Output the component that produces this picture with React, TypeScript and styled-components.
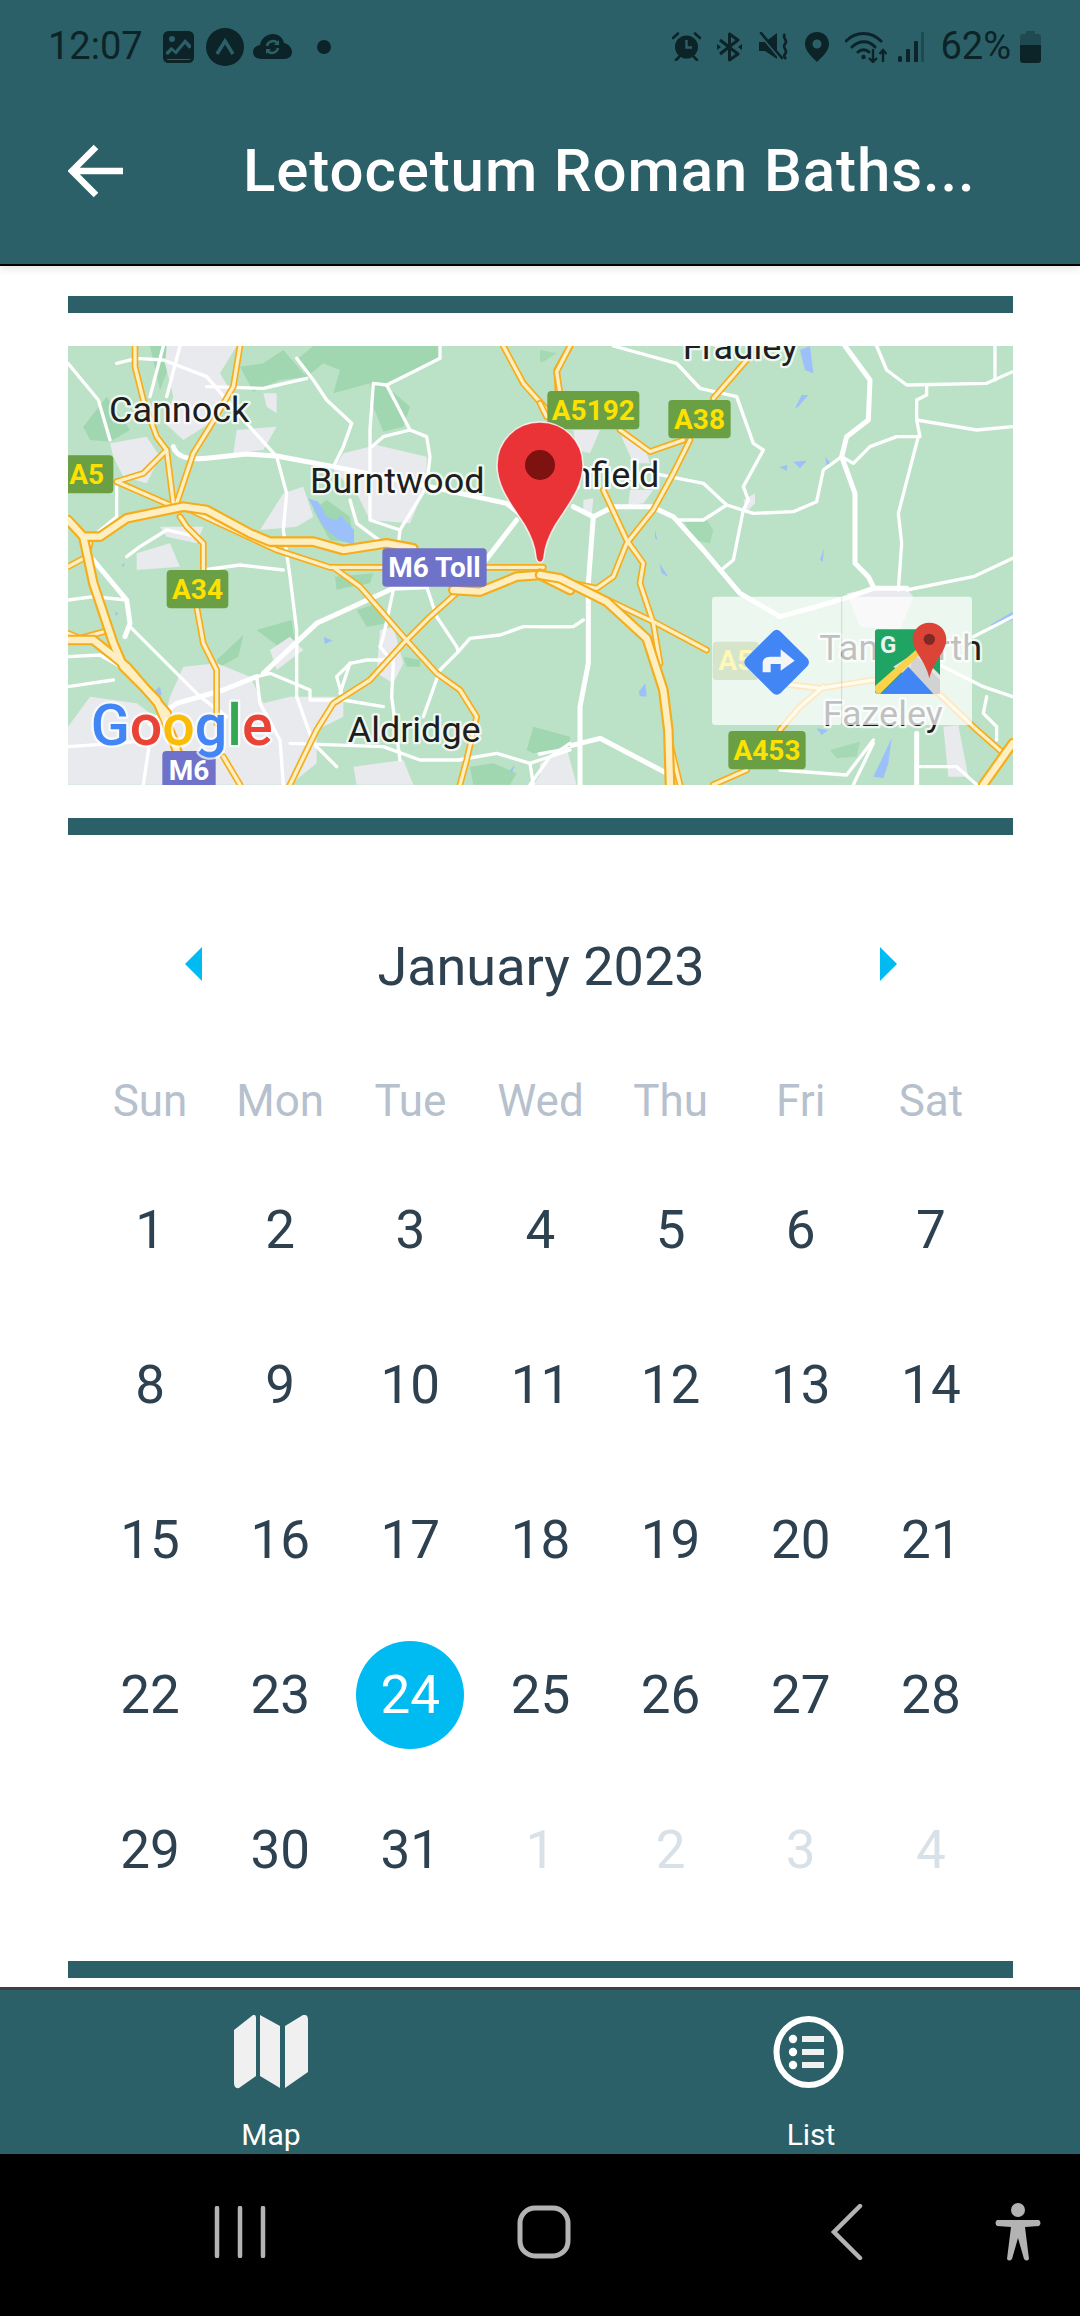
import React from 'react';
import styled, { createGlobalStyle } from 'styled-components';

const TEAL = '#2b6068';
const INK = '#0c2327';

const Global = createGlobalStyle`
  html, body { margin: 0; padding: 0; background: #fff; }
  body { font-family: Roboto, "Liberation Sans", sans-serif; }
  * { box-sizing: border-box; }
`;

const Page = styled.div`
  width: 1080px;
  height: 2316px;
  display: flex;
  flex-direction: column;
  overflow: hidden;
  background: #fff;
`;

const Header = styled.header`
  height: 266px;
  flex: none;
  background: ${TEAL};
  border-bottom: 2px solid #000;
  box-shadow: 0 3px 8px rgba(0, 0, 0, 0.1);
  position: relative;
  z-index: 1;
  display: flex;
  flex-direction: column;
`;

const StatusBar = styled.div`
  height: 93px;
  display: flex;
  align-items: center;
  justify-content: space-between;
  padding: 0 39px 0 48px;
`;

const StatusGroup = styled.div`
  display: flex;
  align-items: center;
`;

const StatusText = styled.span<{ $ml?: number }>`
  font-size: 38px;
  line-height: 93px;
  color: ${INK};
  font-weight: 400;
  margin-left: ${p => p.$ml ?? 0}px;
`;

const StatusIcon = styled.svg<{ $ml?: number }>`
  display: block;
  flex: none;
  margin-left: ${p => p.$ml ?? 0}px;
`;

const Toolbar = styled.div`
  flex: 1;
  display: flex;
  align-items: center;
  padding: 0 0 16px 68px;
`;

const BackIcon = styled.svg`
  display: block;
  flex: none;
`;

const Title = styled.h1`
  margin: 0 0 0 119px;
  font-size: 60px;
  line-height: 70px;
  font-weight: 500;
  letter-spacing: 0.9px;
  color: #fff;
  white-space: nowrap;
`;

const Main = styled.main`
  flex: 1;
  padding: 30px 67px 0 68px;
  display: flex;
  flex-direction: column;
`;

const Rule = styled.div`
  height: 17px;
  flex: none;
  background: ${TEAL};
`;

const MapFrame = styled.div`
  height: 439px;
  margin: 33px 0 33px;
  flex: none;
`;

const MapSvg = styled.svg`
  display: block;
  width: 945px;
  height: 439px;
`;

const Calendar = styled.section`
  margin: 92px 17px 34px 17px;
`;

const MonthRow = styled.div`
  height: 80px;
  display: flex;
  align-items: center;
  justify-content: space-between;
  padding: 0 99px 0 100px;
`;

const MonthTitle = styled.div`
  font-size: 54px;
  line-height: 80px;
  color: #2d4150;
`;

const Arrow = styled.div<{ $dir: 'left' | 'right' }>`
  width: 0;
  height: 0;
  border-top: 17px solid transparent;
  border-bottom: 17px solid transparent;
  ${p =>
    p.$dir === 'left'
      ? 'border-right: 17px solid #00bbf2;'
      : 'border-left: 17px solid #00bbf2;'}
  margin-top: -6px;
`;

const WeekRow = styled.div`
  display: grid;
  grid-template-columns: repeat(7, 1fr);
  height: 60px;
  margin: 64px 0 21px;
`;

const WeekDay = styled.div`
  text-align: center;
  font-size: 44px;
  line-height: 60px;
  color: #b6c1cd;
`;

const DayGrid = styled.div`
  display: grid;
  grid-template-columns: repeat(7, 1fr);
  grid-auto-rows: 155px;
`;

const DayCell = styled.div`
  display: flex;
  align-items: center;
  justify-content: center;
`;

const Day = styled.div<{ $muted?: boolean; $selected?: boolean }>`
  width: 108px;
  height: 108px;
  border-radius: 50%;
  display: flex;
  align-items: center;
  justify-content: center;
  font-size: 53px;
  color: ${p => (p.$selected ? '#fff' : p.$muted ? '#d9e1e8' : '#2d4150')};
  background: ${p => (p.$selected ? '#00bbf2' : 'transparent')};
`;

const TabBar = styled.nav`
  height: 167px;
  flex: none;
  background: ${TEAL};
  border-top: 3px solid #3d3f40;
  display: grid;
  grid-template-columns: 1fr 1fr;
`;

const Tab = styled.div`
  display: flex;
  flex-direction: column;
  align-items: center;
  padding-top: 25px;
`;

const TabIcon = styled.svg<{ $shift?: number }>`
  display: block;
  height: 74px;
  margin-right: ${p => p.$shift ?? 0}px;
`;

const TabLabel = styled.span`
  margin: 28px 0 0 2px;
  font-size: 30px;
  line-height: 36px;
  color: #fff;
`;

const NavBar = styled.div`
  height: 162px;
  flex: none;
  background: #000;
  display: flex;
  align-items: center;
  padding: 0 0 0 214px;
`;

const NavIcon = styled.svg<{ $ml: number }>`
  display: block;
  flex: none;
  margin-left: ${p => p.$ml}px;
  margin-top: -6px;
`;

const darkGreen = [
  'M745,85 L790,48 H1170 V85 L1090,125 L1005,165 L1080,230 L1060,290 L1000,305 L970,230 L960,160 L850,190 L870,120 L820,100 L770,140 Z',
  'M100,290 L170,200 L240,300 L180,335 L120,330 Z',
  'M570,110 L640,100 L700,60 L770,140 L690,150 L610,185 Z',
  'M300,48 H380 L330,180 Z',
  'M620,900 L725,870 L735,945 L680,945 Z',
  'M500,990 L580,915 L565,980 L510,1010 Z',
  'M920,840 L970,825 L1010,880 L950,890 Z',
  'M790,540 L830,510 L900,560 L910,640 L840,630 Z',
  'M855,740 L970,730 L960,760 L900,770 L860,780 Z',
  'M1430,1260 L1450,1190 L1560,1220 V1250 L1450,1270 Z',
  'M1060,980 L1110,990 L1110,1010 L1070,1010 Z',
  'M1260,1310 L1330,1300 L1400,1330 L1380,1364 L1270,1364 Z',
];

const urbanLeft = [
  'M350,48 H560 L510,130 L540,180 L480,280 L400,330 L345,280 L370,200 L345,100 Z',
  'M180,340 L290,320 L330,380 L290,460 L220,440 L190,380 Z',
  'M880,370 L980,345 L1130,380 L1130,460 L1080,580 L960,570 L920,490 L850,420 Z',
  'M560,300 L680,290 L640,360 L550,370 Z',
  'M640,190 L680,190 L680,250 L650,230 Z',
  'M330,590 L460,590 L440,640 L350,620 Z',
  'M260,670 L360,640 L390,710 L260,720 Z',
  'M700,490 L760,470 L790,560 L740,590 L630,600 Z',
  'M54,1190 L120,1100 L260,1120 L340,1180 L360,1100 L400,1010 L500,1000 L600,1040 L640,1120 L720,1100 L880,1100 L880,1160 L800,1200 L800,1300 L720,1364 H54 Z',
  'M660,960 L720,920 L760,960 L680,1020 Z',
  'M990,900 L1030,890 L1060,1000 L1030,1060 L980,1030 Z',
  'M1480,1320 L1560,1290 V1364 H1450 Z',
  'M910,1310 L1060,1290 L1090,1364 H920 Z',
];

const waterLeft = [
  'M775,505 L805,515 L830,560 L860,572 L870,555 L912,600 V645 L860,625 L820,590 Z',
  'M822,920 L848,932 L824,942 Z',
  'M310,1085 L330,1070 L335,1095 L320,1100 Z',
  'M195,845 L205,850 L198,858 Z',
  'M215,705 L225,700 L220,712 Z',
  'M1380,1320 L1395,1305 L1385,1330 Z',
];

const whiteLeftThin = [
  'M54,100 L145,210 L180,330',
  'M200,100 L260,85 L340,90 L470,140 L590,280 L680,380 L710,490 L700,600 L720,740 L740,900 L740,1100 L790,1240 L860,1310',
  'M340,48 L300,200', 'M390,48 L350,200',
  'M470,170 L640,175 L770,145',
  'M740,85 L790,150 L830,210 L905,280 L880,350 L850,410',
  'M1170,48 V85 L1090,125 L1010,165 L970,160 L960,300 V570 L1050,600',
  'M1010,165 L1080,300 L1130,320 L1140,380 L1130,470 L1050,600 L1030,780 L1000,920 L990,950 L1030,1000 L1025,1100 L1050,1290',
  'M1080,300 L1000,320 L965,350',
  'M900,510 L920,580 L1000,640',
  'M1130,770 L1160,860 L1220,950 L1225,965 L1260,925 L1350,915 L1420,890 L1560,890',
  'M1225,965 L1170,1020 L1120,1160',
  'M620,1040 L660,1030 L780,1080 L780,1110 L880,1110 L1000,1130',
  'M200,470 V560 L140,610',
  'M54,810 L130,800 L230,810',
  'M54,980 L150,975 L230,1020',
  'M230,680 L270,650 L350,600 L440,620',
  'M460,720 L570,705 L700,720',
  'M240,890 L450,1100 L530,1160',
  'M1225,1290 L1340,1270 L1440,1300 L1560,1260',
  'M720,1240 L1000,1250 L1110,1290 L1230,1290',
  'M1440,1300 L1450,1364', 'M1560,1240 L1500,1280 L1440,1364',
  'M900,1000 L950,990 L1030,990', 'M900,1000 L870,1090',
  'M620,1040 L630,1120 L690,1230 L700,1364',
  'M54,1070 L120,1060 L190,1050',
  'M54,1250 L200,1240 L300,1230 L280,1364',
  'M880,1110 L860,1040 L900,1000',
];

const whiteLeftWide = [
  'M370,350 C380,385 420,390 470,385 L590,372 L680,378 L850,410 L1000,440 L1300,505 L1370,520 L1420,560',
  'M640,1030 L800,880 L1030,775 L1130,770',
  'M620,1040 L520,1080 L380,1120 L300,1180',
  'M130,690 L230,810 L240,880 L225,920',
  'M1300,700 L1400,570',
];

const yellowThick = [
  'M54,570 L100,620 L150,620 L230,565 L400,530 L470,540 L600,610 L660,635 L790,635 L880,660 L1010,640 L1090,655',
  'M100,620 L130,760 L190,940 L220,1010 L320,1110 L370,1230 L390,1290',
  'M54,930 H130 L230,1010 L350,1150',
  'M1210,780 L1290,785 L1400,740 L1470,735 L1560,780',
];

const yellowThin = [
  'M400,530 L680,660 L840,712 H1480',
  'M54,910 L90,925 L180,900',
  'M255,48 V110 L280,210 L320,320 L350,360 L370,520',
  'M570,48 L550,170 L480,290 L430,370 L380,520',
  'M350,360 L280,430 L200,455 L360,525',
  'M390,560 L410,590 L460,640 V730',
  'M440,830 L460,940 L500,1020 V1180',
  'M120,640 L110,680 L54,710',
  'M850,712 L930,770 L1060,920 L1160,1030 L1230,1080 L1280,1160 L1250,1290 L1230,1364',
  'M1230,780 L1140,860 L1060,940 L960,1050 L850,1120 L800,1200 L720,1364',
  'M1360,48 L1420,160 L1500,250',
  'M1560,50 L1520,120 L1525,200',
  'M520,1280 L570,1364',
];

const whiteRightThin = [
  'M220,48 L410,100 L480,175 L590,200 L640,340 L670,360 L610,470 L625,510 L610,540 L580,690 L550,715',
  'M410,100 L480,175',
  'M1010,48 L1040,120 L1100,165 L1340,160 L1418,125',
  'M1160,165 V195 L1130,210 V270 L1310,300 L1418,290',
  'M1130,270 L1140,320 L1070,320 L990,350 L940,400 L905,380',
  'M1135,320 L1075,550 L1085,640 L1075,780',
  'M1365,48 V150',
  'M410,570 H490 L560,525 L640,550 L760,545 L830,515 L850,420 L905,380',
  'M340,430 L490,460 L560,525',
  'M0,890 H100 L130,870',
  'M720,1320 L920,1335 L1000,1230',
  'M1130,1310 H1250 L1310,1364',
  'M1100,780 L1300,740 L1418,685',
  'M1190,1000 L1330,1070 L1418,1100',
  'M1340,1100 L1330,1150 L1370,1190 V1230',
  'M1300,920 L1418,860',
  'M1000,1240 L940,1364',
];

const whiteRightWide = [
  'M915,48 L990,150 L985,270 L920,320 L905,380 L945,490 V700 L985,740 L1000,770',
  'M345,535 L400,560 L490,660 L600,790 L720,860 L830,830 L930,800 L1000,775 L1100,775',
  'M100,530 L160,560 L220,530 H345',
  'M160,560 L145,760 V1000 L120,1130 V1364',
  'M0,1270 L180,1225 L400,1340',
  'M1130,1210 V1364',
];

const waterRight = [
  'M780,60 L810,48 L820,130 L795,120 Z',
  'M765,235 L785,195 L805,195 L775,230 Z',
  'M760,395 L800,392 L780,415 Z',
  'M718,412 L742,405 L740,422 Z',
  'M855,380 L872,400 L860,405 Z',
  'M358,700 L385,740 L365,730 Z',
  'M296,1085 L316,1060 L320,1100 L300,1098 Z',
  'M840,690 L852,655 L848,695 Z',
  'M1350,885 L1418,845 V870 L1370,885 Z',
  'M1000,1340 L1055,1225 L1045,1300 L1030,1345 Z',
  'M830,1195 L865,1200 L845,1215 Z',
  'M345,600 L352,630 L345,625 Z',
];

const urbanRight = [
  'M100,300 L180,300 L150,370 L110,360 Z',
  'M240,310 L320,370 L330,400 L280,400 Z',
  'M270,480 L340,480 L310,520 L265,525 Z',
  'M130,510 L160,505 L155,555 L130,545 Z',
  'M610,510 L645,490 L645,520 L620,545 Z',
  'M920,790 L1000,775 L1100,775 L1120,800 L1080,900 L960,890 Z',
  'M1210,1190 L1255,1185 L1285,1340 L1225,1340 Z',
  'M0,1300 L80,1255 L110,1364 H0 Z',
];

const greenRight = [
  'M430,570 L500,570 L520,600 L510,640 L460,630 Z',
  'M870,1260 L960,1235 L950,1280 L890,1285 Z',
  'M0,1230 L80,1220 L60,1255 L0,1260 Z',
  'M0,60 L50,70 L10,95 H0 Z',
];

const Roads = ({ d, color, w }: { d: string[]; color: string; w: number }) => (
  <g fill="none" stroke={color} strokeWidth={w} strokeLinejoin="round" strokeLinecap="round">
    {d.map((p, i) => <path key={i} d={p} />)}
  </g>
);

const Fills = ({ d, color }: { d: string[]; color: string }) => (
  <g fill={color}>{d.map((p, i) => <path key={i} d={p} />)}</g>
);

const Yellow = ({ d, outer, inner }: { d: string[]; outer: number; inner: number }) => (
  <>
    <Roads d={d} color="#f6ad1c" w={outer} />
    <Roads d={d} color="#feefc3" w={inner} />
  </>
);

const PlaceLabel = styled.text<{ $halo?: string }>`
  font-family: Roboto, sans-serif;
  font-size: 108px;
  fill: #1c1e20;
  stroke: ${p => p.$halo ?? 'rgba(255, 255, 255, 0.75)'};
  stroke-width: 14px;
  paint-order: stroke;
  stroke-linejoin: round;
`;

const ShieldText = styled.text<{ $fill: string }>`
  font-family: Roboto, sans-serif;
  font-size: 84px;
  font-weight: 700;
  fill: ${p => p.$fill};
  text-anchor: middle;
`;

const Shield = ({ x, y, w, h, label, purple }: { x: number; y: number; w: number; h: number; label: string; purple?: boolean }) => (
  <g>
    <rect x={x} y={y} width={w} height={h} rx={12} fill={purple ? '#6f72c9' : '#6a9f43'} />
    <ShieldText x={x + w / 2} y={y + 86} $fill={purple ? '#fff' : '#fde100'}>{label}</ShieldText>
  </g>
);

const GoogleWord = styled.text`
  font-family: Roboto, sans-serif;
  font-size: 172px;
  font-weight: 500;
  stroke: rgba(255, 255, 255, 0.7);
  stroke-width: 14px;
  paint-order: stroke;
  stroke-linejoin: round;
`;

const MapsG = styled.text`
  font-family: Roboto, sans-serif;
  font-size: 72px;
  font-weight: 700;
  fill: #e8f5ee;
`;

const MapPicture = () => (
  <MapSvg viewBox="0 0 945 439" xmlns="http://www.w3.org/2000/svg">
    <rect width="945" height="439" fill="#bbe2c6" />
    <g transform="translate(472 -16) scale(.33333)">
      <Fills d={greenRight} color="#a5d9b4" />
      <Fills d={urbanRight} color="#e8eaed" />
      <Fills d={waterRight} color="#9cc0f9" />
      <Roads d={whiteRightThin} color="#fff" w={10} />
      <Roads d={whiteRightWide} color="#fff" w={15} />
    </g>
    <g transform="translate(-18 -16) scale(.33333)">
      <Fills d={darkGreen} color="#a0d6b0" />
      <Fills d={urbanLeft} color="#e8eaed" />
      <Fills d={waterLeft} color="#9cc0f9" />
      <Roads d={whiteLeftThin} color="#fff" w={10} />
      <Roads d={whiteLeftWide} color="#fff" w={15} />
      <Yellow d={yellowThin} outer={20} inner={10} />
      <Yellow d={yellowThick} outer={32} inner={19} />
      <PlaceLabel x="177" y="275">Cannock</PlaceLabel>
      <PlaceLabel x="780" y="490">Burntwood</PlaceLabel>
      <PlaceLabel x="893" y="1235">Aldridge</PlaceLabel>
      <Shield x={30} y={376} w={160} h={114} label="A5" />
      <Shield x={350} y={720} w={185} h={115} label="A34" />
      <Shield x={997} y={655} w={313} h={115} label="M6 Toll" purple />
      <Shield x={337} y={1263} w={160} h={115} label="M6" purple />
      <GoogleWord x="122" y="1245">
        <tspan fill="#4285f4">G</tspan>
        <tspan fill="#ea4335">o</tspan>
        <tspan fill="#fbbc05">o</tspan>
        <tspan fill="#4285f4">g</tspan>
        <tspan fill="#34a853">l</tspan>
        <tspan fill="#ea4335">e</tspan>
      </GoogleWord>
    </g>
    <g transform="translate(472 -16) scale(.33333)">
      <Yellow
        d={[
          'M90,48 L50,125 L60,190', 'M0,220 L20,260',
          'M620,90 L520,205', 'M450,330 L400,430 L340,540 L260,640 L220,740 L170,775 L100,760',
          'M240,300 L330,365 L430,330',
          'M190,480 L260,630 L310,700 L300,760 L340,880 L360,1000',
          'M0,725 L140,780 L350,880 L500,960',
          'M720,1060 L840,1075 L1000,1050 L1190,1085 L1300,1190 L1390,1270',
          'M720,1200 L780,1130 L850,1070',
          'M520,1364 L620,1320',
          'M390,1240 L420,1364',
        ]}
        outer={20}
        inner={10}
      />
      <Yellow
        d={['M0,735 L60,745 L200,815 L320,925 L370,1080 L385,1200 L390,1364', 'M1330,1364 L1418,1240']}
        outer={32}
        inner={19}
      />
      <PlaceLabel x="358" y="472" textAnchor="end" $halo="#fff">Lichfield</PlaceLabel>
      <PlaceLabel x="428" y="88">Fradley</PlaceLabel>
      <PlaceLabel x="838" y="990">Tamworth</PlaceLabel>
      <PlaceLabel x="848" y="1187">Fazeley</PlaceLabel>
      <Shield x={22} y={183} w={276} h={115} label="A5192" />
      <Shield x={385} y={210} w={187} h={115} label="A38" />
      <Shield x={565} y={1203} w={232} h={115} label="A453" />
      <Shield x={518} y={935} w={138} h={115} label="A5" />
      <rect x="516" y="800" width="389" height="385" rx="10" fill="#fff" fillOpacity=".72" />
      <rect x="905" y="800" width="391" height="385" rx="10" fill="#fff" fillOpacity=".72" />
      <rect x="903" y="800" width="4" height="385" fill="#000" fillOpacity=".08" />
      <path d="M710,899 Q716,899 722,905 L802,985 Q812,997 802,1009 L722,1089 Q710,1100 698,1089 L618,1009 Q608,997 618,985 L698,905 Q704,899 710,899 Z" fill="#4285f4" />
      <path d="M668,1027 V1000 Q668,980 690,980 H722 V958 L764,992 L722,1022 V1002 H692 V1027 Z" fill="#f4f6f6" />
      <rect x="1005" y="898" width="195" height="193" rx="8" fill="#1fa463" />
      <path d="M1130,965 L1200,1035 V1091 H1180 L1060,1010 Z" fill="#e4e4e4" />
      <path d="M1120,970 L1200,1050 V1091 H1180 L1110,1020 Z" fill="#d2d2d2" />
      <path d="M1024,1091 L1105,1010 L1180,1091 Z" fill="#4285f4" />
      <path d="M1005,1068 L1130,958 L1140,972 L1020,1091 H1012 L1005,1083 Z" fill="#fbd34b" />
      <MapsG x="1020" y="968">G</MapsG>
      <path d="M1168,878 C1197,878 1219,900 1219,928 C1219,965 1182,990 1168,1045 C1156,990 1118,965 1118,928 C1118,900 1140,878 1168,878 Z" fill="#db4437" />
      <circle cx="1168" cy="928" r="17" fill="#7e2a22" />
    </g>
    <path
      d="M472,76 C496,76 515,95 515,119 C515,142 500,159 488,178 C482,188 477,200 476,211 C475,218 469,218 468,211 C467,200 462,188 456,178 C444,159 429,142 429,119 C429,95 448,76 472,76 Z"
      fill="#ea3337"
      stroke="#fff"
      strokeOpacity=".8"
      strokeWidth="1.5"
    />
    <circle cx="472" cy="119" r="15" fill="#7e1210" />
  </MapSvg>
);

const days: { n: number; muted?: boolean; selected?: boolean }[] = [
  ...Array.from({ length: 31 }, (_, i) => ({ n: i + 1, selected: i + 1 === 24 })),
  ...[1, 2, 3, 4].map(n => ({ n, muted: true })),
];

const App = () => (
  <Page>
    <Global />
    <Header>
      <StatusBar>
        <StatusGroup>
          <StatusText>12:07</StatusText>
          <StatusIcon $ml={20} width="31" height="32" viewBox="0 0 31 32">
            <rect x="1.5" y="1.5" width="28" height="29" rx="4" fill="none" stroke={INK} strokeWidth="3" />
            <path d="M3,3 H28 V14 L22,8 L12,20 L8,16 L3,21 Z" fill={INK} />
            <path d="M3,28 V24 L9,18 L13,22 L22,11 L28,17 V28 Z" fill={INK} />
            <circle cx="9" cy="8" r="3" fill={TEAL} />
            <path d="M4,23 L9,18 L13,22 L22,11 L27,17" fill="none" stroke={TEAL} strokeWidth="2.5" />
          </StatusIcon>
          <StatusIcon $ml={12} width="38" height="38" viewBox="0 0 38 38">
            <circle cx="19" cy="19" r="19" fill={INK} />
            <path d="M11,26 L19,13 L27,26" fill="none" stroke={TEAL} strokeWidth="3.5" />
          </StatusIcon>
          <StatusIcon $ml={9} width="39" height="25" viewBox="0 0 39 25">
            <path d="M8,25 C2,25 0,21 0,18 C0,14 3,12 7,11 C8,5 13,0 20,0 C26,0 30,4 31,9 C36,10 39,14 39,18 C39,22 36,25 31,25 Z" fill={INK} />
            <path d="M14,12 A6,6 0 0 1 25,10 M25,14 A6,6 0 0 1 14,16" fill="none" stroke={TEAL} strokeWidth="2.5" />
            <path d="M26,6 V11 H21 Z M13,20 V15 H18 Z" fill={TEAL} />
          </StatusIcon>
          <StatusIcon $ml={25} width="14" height="14" viewBox="0 0 14 14">
            <circle cx="7" cy="7" r="7" fill={INK} />
          </StatusIcon>
        </StatusGroup>
        <StatusGroup>
          <StatusIcon width="29" height="29" viewBox="0 0 29 29">
            <circle cx="14.5" cy="15" r="11.5" fill={INK} />
            <path d="M14.5,8 V15.5 H20" fill="none" stroke={TEAL} strokeWidth="2.4" />
            <path d="M1,6 L6,1.5 M28,6 L23,1.5 M4,28 L7,25 M25,28 L22,25" stroke={INK} strokeWidth="2.6" strokeLinecap="round" />
          </StatusIcon>
          <StatusIcon $ml={16} width="25" height="30" viewBox="0 0 25 30">
            <path d="M3,8 L21,22 L12.5,28 V2 L21,8 L3,22" fill="none" stroke={INK} strokeWidth="3" strokeLinejoin="round" />
            <path d="M0,12 L4,15 L0,18 Z M25,12 L21,15 L25,18 Z" fill={INK} />
          </StatusIcon>
          <StatusIcon $ml={17} width="30" height="29" viewBox="0 0 30 29">
            <path d="M0,10 H6 L18,1 V27 L6,19 H0 Z" fill={INK} />
            <path d="M1,2 L22,27" stroke={TEAL} strokeWidth="3" />
            <path d="M2,1 L23,26" stroke={INK} strokeWidth="2.6" strokeLinecap="round" />
            <path d="M26,2 C22,6 30,8 26,12 C22,16 30,18 26,22 C24,24 26,26 27,27" fill="none" stroke={INK} strokeWidth="2.6" />
          </StatusIcon>
          <StatusIcon $ml={16} width="24" height="30" viewBox="0 0 24 30">
            <path d="M12,0 C19,0 24,5 24,12 C24,19 17,25 12,30 C7,25 0,19 0,12 C0,5 5,0 12,0 Z" fill={INK} />
            <circle cx="12" cy="12" r="4.5" fill={TEAL} />
          </StatusIcon>
          <StatusIcon $ml={16} width="42" height="32" viewBox="0 0 42 32">
            <path d="M1,10 C11,0 26,0 36,10 M7,16 C14,9 24,9 30,16 M13,21 C16,18 21,18 24,21" fill="none" stroke={INK} strokeWidth="3" strokeLinecap="round" />
            <circle cx="18.5" cy="26" r="2.2" fill={INK} />
            <path d="M28,18 V31 M24,27 L28,31 L32,27 M38,31 V19 M34.500,23 L38,19 L41.500,23" fill="none" stroke={INK} strokeWidth="2.4" />
          </StatusIcon>
          <StatusIcon $ml={11} width="27" height="30" viewBox="0 0 27 30">
            <rect x="0" y="24" width="4" height="6" rx="1.500" fill={INK} />
            <rect x="8" y="17" width="4" height="13" rx="1" fill={INK} />
            <rect x="16" y="9" width="4" height="21" rx="1" fill={INK} />
            <rect x="23" y="0" width="3" height="30" rx="1" fill={INK} opacity=".35" />
          </StatusIcon>
          <StatusText $ml={15}>62%</StatusText>
          <StatusIcon $ml={9} width="21" height="32" viewBox="0 0 21 32">
            <path d="M6,0 H15 V3 H18 Q21,3 21,6 V14 H0 V6 Q0,3 3,3 H6 Z" fill={INK} opacity=".35" />
            <path d="M0,14 H21 V29 Q21,32 18,32 H3 Q0,32 0,29 Z" fill={INK} />
          </StatusIcon>
        </StatusGroup>
      </StatusBar>
      <Toolbar>
        <BackIcon width="56" height="54" viewBox="0 0 56 54">
          <path d="M28,3 L4,27 L28,51 M4,27 H55" fill="none" stroke="#fff" strokeWidth="6.500" />
        </BackIcon>
        <Title>Letocetum Roman Baths...</Title>
      </Toolbar>
    </Header>

    <Main>
      <Rule />
      <MapFrame>
        <MapPicture />
      </MapFrame>
      <Rule />
      <Calendar>
        <MonthRow>
          <Arrow $dir="left" />
          <MonthTitle>January 2023</MonthTitle>
          <Arrow $dir="right" />
        </MonthRow>
        <WeekRow>
          {['Sun', 'Mon', 'Tue', 'Wed', 'Thu', 'Fri', 'Sat'].map(d => (
            <WeekDay key={d}>{d}</WeekDay>
          ))}
        </WeekRow>
        <DayGrid>
          {days.map((d, i) => (
            <DayCell key={i}>
              <Day $muted={d.muted} $selected={d.selected}>{d.n}</Day>
            </DayCell>
          ))}
        </DayGrid>
      </Calendar>
      <Rule />
    </Main>

    <TabBar>
      <Tab>
        <TabIcon width="75" viewBox="0 0 75 74">
          <path d="M1,15 L20,0 Q23,-1 23,3 V61 L6,73 Q1,74 1,68 Z" fill="#f0f0f0" />
          <path d="M27,0 L47,11 V73 L27,61 Z" fill="#f0f0f0" />
          <path d="M52,11 L70,0 Q75,-1 75,5 V57 L52,73 Z" fill="#f0f0f0" />
        </TabIcon>
        <TabLabel>Map</TabLabel>
      </Tab>
      <Tab>
        <TabIcon $shift={3} width="71" viewBox="0 0 71 74">
          <ellipse cx="35.500" cy="37" rx="32" ry="33" fill="none" stroke="#fff" strokeWidth="6" />
          <circle cx="20" cy="24" r="4.200" fill="#fff" />
          <circle cx="20" cy="37" r="4.200" fill="#fff" />
          <circle cx="20" cy="50" r="4.200" fill="#fff" />
          <rect x="29" y="21" width="22" height="6" fill="#f0f0f0" />
          <rect x="29" y="34" width="22" height="6" fill="#f0f0f0" />
          <rect x="29" y="47" width="22" height="6" fill="#f0f0f0" />
        </TabIcon>
        <TabLabel>List</TabLabel>
      </Tab>
    </TabBar>

    <NavBar>
      <NavIcon $ml={0} width="52" height="52" viewBox="0 0 52 52">
        <path d="M3,2 V50 M26,2 V50 M49,2 V50" stroke="#b3b3b3" strokeWidth="4.500" strokeLinecap="round" />
      </NavIcon>
      <NavIcon $ml={251} width="54" height="54" viewBox="0 0 54 54">
        <rect x="3" y="3" width="48" height="48" rx="15" fill="none" stroke="#b3b3b3" strokeWidth="5" />
      </NavIcon>
      <NavIcon $ml={260} width="32" height="56" viewBox="0 0 32 56">
        <path d="M29,2 L3,28 L29,54" fill="none" stroke="#b3b3b3" strokeWidth="4.500" strokeLinecap="round" />
      </NavIcon>
      <NavIcon $ml={131} width="48" height="58" viewBox="0 0 48 58">
        <circle cx="24" cy="7" r="7" fill="#b3b3b3" />
        <path d="M3,17 H45 Q48,20 45,23 L31,24 L35,56 Q33,59 30,56 L24,35 L18,56 Q15,59 13,56 L17,24 L3,23 Q0,20 3,17 Z" fill="#b3b3b3" />
      </NavIcon>
    </NavBar>
  </Page>
);

export default App;
